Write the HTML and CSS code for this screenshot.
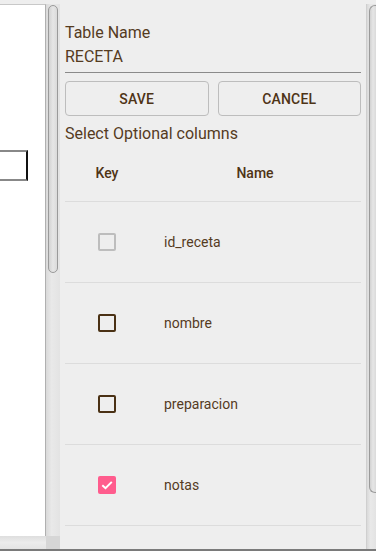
FILE: index.html
```html
<!DOCTYPE html>
<html>
<head>
<meta charset="utf-8">
<link rel="stylesheet" href="styles.css">
</head>
<body>
<div class="app">
  <div class="left">
    <div class="left-top">
      <div class="canvas">
        <div class="canvas-input"></div>
      </div>
      <div class="vscroll vscroll-left"><div class="thumb thumb-left"></div></div>
    </div>
    <div class="left-bottom">
      <div class="hscroll"></div>
      <div class="corner"></div>
    </div>
  </div>
  <div class="right">
    <div class="panel">
      <div class="field">
        <div class="label">Table Name</div>
        <div class="value">RECETA</div>
      </div>
      <div class="buttons">
        <button class="btn">SAVE</button>
        <button class="btn">CANCEL</button>
      </div>
      <div class="section">Select Optional columns</div>
      <div class="table">
        <div class="row head">
          <div class="c-key">Key</div>
          <div class="c-name">Name</div>
        </div>
        <div class="row">
          <div class="c-key"><span class="cb cb-disabled"></span></div>
          <div class="c-name">id_receta</div>
        </div>
        <div class="row">
          <div class="c-key"><span class="cb"></span></div>
          <div class="c-name">nombre</div>
        </div>
        <div class="row">
          <div class="c-key"><span class="cb"></span></div>
          <div class="c-name">preparacion</div>
        </div>
        <div class="row">
          <div class="c-key"><span class="cb cb-checked"><svg viewBox="0 0 18 18" width="18" height="18"><path d="M4.3 9.2 L7.5 12.2 L13.8 5.9" fill="none" stroke="#fff" stroke-width="2"/></svg></span></div>
          <div class="c-name">notas</div>
        </div>
      </div>
    </div>
    <div class="vscroll vscroll-right"><div class="thumb thumb-right"></div></div>
  </div>
</div>
</body>
</html>
```
FILE: styles.css
```css
html, body {
  margin: 0;
  padding: 0;
  width: 376px;
  height: 551px;
  overflow: hidden;
  background: #eeeeee;
  font-family: Roboto, "Liberation Sans", sans-serif;
  color: #553b1f;
}
.app {
  display: flex;
  height: 549px;
  border-bottom: 2px solid #7a7a7a;
}
.left {
  width: 60px;
  display: flex;
  flex-direction: column;
  padding-top: 4px;
  box-sizing: border-box;
}
.left-top {
  flex: 1;
  display: flex;
  min-height: 0;
}
.canvas {
  width: 46px;
  background: #ffffff;
  border-top: 1px solid #c8c8c8;
  border-right: 1px solid #b0b0b0;
  box-sizing: border-box;
  padding-top: 145px;
}
.canvas-input {
  width: 28px;
  height: 31px;
  box-sizing: border-box;
  border-top: 2px solid #888;
  border-bottom: 2px solid #888;
  border-right: 2px solid #111;
}
.vscroll {
  background: linear-gradient(to right, #d9d9d9, #e9e9e9 40%, #e3e3e3);
  box-sizing: border-box;
}
.vscroll-left {
  width: 14px;
  padding: 1px 2px 0 2px;
}
.thumb {
  border: 1px solid #9a9a9a;
  border-radius: 6px;
  background: linear-gradient(to right, #d2d2d2, #e6e6e6 50%, #dadada);
  box-sizing: border-box;
}
.thumb-left {
  height: 268px;
}
.left-bottom {
  height: 13px;
  display: flex;
}
.hscroll {
  width: 46px;
  background: linear-gradient(to bottom, #dedede, #ececec 50%, #e4e4e4);
}
.corner {
  width: 14px;
  background: #d6d6d6;
}
.right {
  flex: 1;
  display: flex;
}
.panel {
  flex: 1;
  padding: 23px 5px 0 5px;
  display: flex;
  flex-direction: column;
}
.field {
  border-bottom: 1px solid #8a8a8a;
  padding-bottom: 5px;
}
.label, .value {
  font-size: 16px;
  line-height: 20px;
}
.value {
  margin-top: 4px;
}
.buttons {
  display: grid;
  grid-template-columns: 1fr 1fr;
  gap: 9px;
  margin-top: 8px;
}
.btn {
  height: 35px;
  background: transparent;
  border: 1px solid #bdbdbd;
  border-radius: 4px;
  font-family: Roboto, "Liberation Sans", sans-serif;
  font-weight: 500;
  font-size: 14px;
  color: #4e3416;
  letter-spacing: 0.2px;
  padding: 0;
}
.section {
  font-size: 16px;
  line-height: 20px;
  margin-top: 8px;
}
.table {
  margin-top: 8px;
}
.row {
  display: flex;
  align-items: center;
  height: 80px;
  border-bottom: 1px solid #dcdcdc;
  font-size: 14px;
}
.row.head {
  align-items: flex-start;
  padding-top: 13px;
  height: 36px;
  font-weight: 500;
  color: #4e3416;
}
.c-key {
  width: 84px;
  display: flex;
  justify-content: center;
}
.row .c-name {
  padding-left: 15px;
}
.row.head .c-name {
  flex: 1;
  padding-left: 0;
  text-align: center;
}
.cb {
  width: 18px;
  height: 18px;
  box-sizing: border-box;
  border: 2px solid #4a3114;
  border-radius: 2px;
  display: block;
}
.cb-disabled {
  border-color: #bdbdbd;
}
.cb-checked {
  background: #ff5c8d;
  border: none;
}
.cb-checked svg {
  display: block;
}
.vscroll-right {
  width: 10px;
  margin-top: 4px;
  padding: 1px 0 0 2px;
  border-left: 1px solid #cfcfcf;
}
.thumb-right {
  height: 488px;
  border-right: none;
  border-radius: 6px 0 0 6px;
}
```
